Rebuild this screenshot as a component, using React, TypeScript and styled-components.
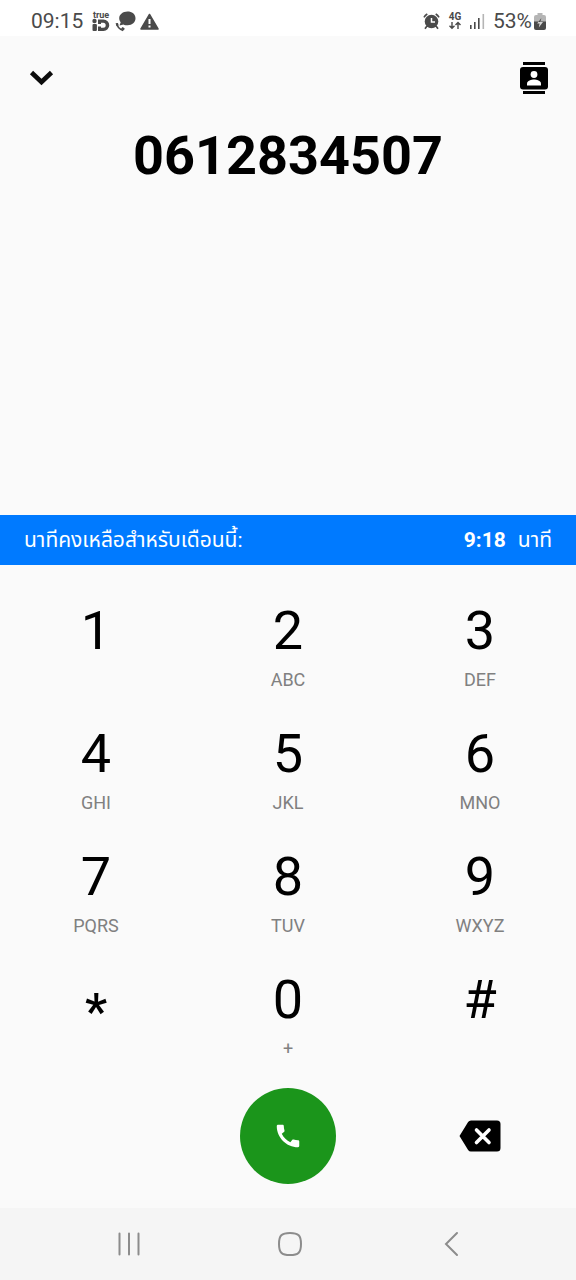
import React from "react";
import styled, { createGlobalStyle } from "styled-components";

const GlobalStyle = createGlobalStyle`
  *, *::before, *::after { box-sizing: border-box; }
  body {
    margin: 0;
    background: #fafafa;
    color: #000;
    font-family: Roboto, "Noto Sans Thai", "Noto Sans", sans-serif;
  }
  button { font: inherit; color: inherit; }
`;

const Screen = styled.div`
  display: flex;
  flex-direction: column;
  min-height: 100vh;
`;

const StatusBar = styled.header`
  display: flex;
  align-items: center;
  justify-content: space-between;
  height: 36px;
  padding: 6px 30px 0 31px;
  background: #fff;
  color: #4a4a4a;
  font-size: 21px;
  line-height: 30px;
`;

const StatusGroup = styled.div<{ $gap: number }>`
  display: flex;
  align-items: center;
  gap: ${(p) => p.$gap}px;
  svg { display: block; }
`;

const Battery = styled.div`
  display: flex;
  align-items: center;
  gap: 2px;
`;

const TopBar = styled.div`
  display: flex;
  align-items: center;
  justify-content: space-between;
  height: 84px;
  padding: 0 28px 0 24px;
`;

const IconButton = styled.button`
  display: flex;
  align-items: center;
  justify-content: center;
  padding: 0;
  border: 0;
  background: none;
  cursor: pointer;
`;

const Main = styled.main`
  display: flex;
  flex: 1;
  flex-direction: column;
`;

const NumberDisplay = styled.output`
  flex: 1;
  min-height: 72px;
  text-align: center;
  font-size: 54px;
  font-weight: 700;
  line-height: 72px;
`;

const MinutesBanner = styled.div`
  display: flex;
  align-items: center;
  justify-content: space-between;
  height: 50px;
  padding: 0 24px 1px;
  background: #007aff;
  color: #fff;
  font-size: 21px;
  line-height: 28px;
`;

const MinutesLeft = styled.span`
  display: flex;
  gap: 12px;
`;

const Keypad = styled.div`
  display: grid;
  grid-template-columns: repeat(3, 1fr);
  row-gap: 30px;
  padding-top: 34px;
`;

const Key = styled.button`
  display: flex;
  flex-direction: column;
  align-items: center;
  gap: 5px;
  height: 93px;
  padding: 0;
  border: 0;
  background: none;
  cursor: pointer;
`;

const Digit = styled.span<{ $symbol?: boolean }>`
  height: 64px;
  font-size: ${(p) => (p.$symbol ? 50 : 54)}px;
  font-weight: ${(p) => (p.$symbol ? 500 : 400)};
  line-height: ${(p) => (p.$symbol ? 88 : 64)}px;
`;

const Letters = styled.span`
  color: #808080;
  font-size: 18px;
  line-height: 24px;
`;

const Actions = styled.div`
  display: grid;
  grid-template-columns: repeat(3, 1fr);
  place-items: center;
  padding: 27px 0 24px;
`;

const CallButton = styled(IconButton)`
  grid-column: 2;
  width: 96px;
  height: 96px;
  border-radius: 50%;
  background: #1b951b;
`;

const SystemNav = styled.nav`
  display: flex;
  align-items: center;
  justify-content: space-between;
  height: 72px;
  padding: 0 111px 0 115px;
  background: #f5f5f5;
`;

const keys = [
  { digit: "1", letters: "" },
  { digit: "2", letters: "ABC" },
  { digit: "3", letters: "DEF" },
  { digit: "4", letters: "GHI" },
  { digit: "5", letters: "JKL" },
  { digit: "6", letters: "MNO" },
  { digit: "7", letters: "PQRS" },
  { digit: "8", letters: "TUV" },
  { digit: "9", letters: "WXYZ" },
  { digit: "*", letters: "" },
  { digit: "0", letters: "+" },
  { digit: "#", letters: "" },
];

const TrueIdIcon = () => (
  <svg width="20" height="22" viewBox="0 0 20 22" fill="#4a4a4a" aria-hidden="true">
    <text x="10" y="8" textAnchor="middle" fontSize="9" fontWeight="700" fontFamily="Roboto, sans-serif">true</text>
    <circle cx="3.500" cy="11" r="2.200" />
    <rect x="1.500" y="14" width="4.400" height="7" rx="1" />
    <path fillRule="evenodd" d="M7 9.500h5.500a5.700 5.700 0 0 1 0 11.500H7v-4.500h3v1.200h2.200a2.500 2.500 0 0 0 0-5H10v1.300H7z" />
  </svg>
);

const ChatCallIcon = () => (
  <svg width="21" height="21" viewBox="0 0 21 21" fill="#4a4a4a" aria-hidden="true">
    <path d="M12.500 0.500C17 0.500 20.500 3.200 20.500 7.300s-3.300 7-7.800 7c-1.600 0-3-.2-4.200-.9L4.500 14.600l1.200-3.300C4.600 10 4.200 8.800 4.200 7.300 4.200 3.300 8 .5 12.500 .5z" />
    <path d="M2 12.500c.4 3.400 2.800 6 6.200 6.800" fill="none" stroke="#4a4a4a" strokeWidth="1.800" />
    <path d="M.6 12.200l2.400-.3.500 2.400-2 .9zM6 17.600l1.700-1.500 2 1.300-.8 2.200z" />
  </svg>
);

const WarningIcon = () => (
  <svg width="19" height="17" viewBox="0 0 19 17" aria-hidden="true">
    <path d="M9.500 1.500L18 16H1z" fill="#4a4a4a" stroke="#4a4a4a" strokeWidth="1.500" strokeLinejoin="round" />
    <path d="M9.500 6v5M9.500 12.500v2" stroke="#fff" strokeWidth="2" />
  </svg>
);

const AlarmIcon = () => (
  <svg width="17" height="17" viewBox="0 0 17 17" fill="none" stroke="#4a4a4a" aria-hidden="true">
    <circle cx="8.500" cy="8.500" r="6.800" fill="#4a4a4a" stroke="none" />
    <path d="M1 4.300A9 9 0 0 1 4.300 1M12.700 1A9 9 0 0 1 16 4.300M4 13l-2 2.700M13 13l2 2.700" strokeWidth="1.700" />
    <path d="M8.500 5v4h3.500" stroke="#fff" strokeWidth="1.500" />
  </svg>
);

const NetworkIcon = () => (
  <svg width="14" height="20" viewBox="0 0 14 20" aria-hidden="true">
    <text x="7" y="9" textAnchor="middle" fontSize="10" fontWeight="700" fontFamily="Roboto, sans-serif" fill="#4a4a4a">4G</text>
    <path d="M4 11v6M1.500 14.700L4 17.200l2.500-2.500M10 18v-6M7.500 14l2.500-2.500L12.500 14" fill="none" stroke="#4a4a4a" strokeWidth="1.400" />
  </svg>
);

const SignalIcon = () => (
  <svg width="15" height="15" viewBox="0 0 15 15" fill="#4a4a4a" aria-hidden="true">
    <rect x="0" y="11" width="1.600" height="4" />
    <rect x="4" y="8" width="1.600" height="7" />
    <rect x="8" y="4" width="1.600" height="11" />
    <rect x="12.500" y="0" width="1.600" height="15" fill="#b5b5b5" />
  </svg>
);

const BatteryIcon = () => (
  <svg width="12" height="17" viewBox="0 0 12 17" aria-hidden="true">
    <path d="M3.500 0h5v2H10a2 2 0 0 1 2 2v5H0V4a2 2 0 0 1 2-2h1.500z" fill="#b5b5b5" />
    <path d="M0 8.500h12V15a2 2 0 0 1-2 2H2a2 2 0 0 1-2-2z" fill="#4a4a4a" />
    <path d="M7.300 5L3.200 10.500h2.400L4.800 14.500 9 9H6.500z" fill="#d8d8d8" />
    <path d="M7.300 5L4.300 9h2.200z" fill="#4a4a4a" />
  </svg>
);

const ChevronDownIcon = () => (
  <svg width="36" height="36" viewBox="0 0 36 36" fill="none" aria-hidden="true">
    <path d="M7.500 12.500L17.500 22L27.500 12.500" stroke="#0c0c0c" strokeWidth="4.600" />
  </svg>
);

const ContactsIcon = () => (
  <svg width="28" height="34" viewBox="0 0 28 34" aria-hidden="true">
    <path d="M3 1h22v3H3zM3 30h22v3H3z" />
    <rect x="0" y="6" width="28" height="22.500" rx="3" />
    <circle cx="14" cy="13.500" r="3.400" fill="#fff" />
    <path d="M7 24.500v-2c0-2.700 4.500-4 7-4s7 1.300 7 4v2z" fill="#fff" />
  </svg>
);

const PhoneIcon = () => (
  <svg width="30" height="30" viewBox="0 0 24 24" fill="#fff" aria-hidden="true">
    <path d="M20.010 15.380c-1.230 0-2.420-.2-3.530-.56-.35-.12-.74-.03-1.010.24l-1.570 1.970c-2.830-1.350-5.480-3.900-6.890-6.830l1.950-1.660c.27-.28.35-.67.24-1.020-.37-1.110-.56-2.300-.56-3.530 0-.54-.45-.99-.99-.99H4.190C3.650 3 3 3.240 3 3.990 3 13.280 10.730 21 20.010 21c.71 0 .99-.63.99-1.180v-3.450c0-.54-.45-.99-.99-.99z" />
  </svg>
);

const BackspaceIcon = () => (
  <svg width="42" height="32" viewBox="0 0 42 32" aria-hidden="true">
    <path d="M12 .500H38a3.500 3.500 0 0 1 3.500 3.500V28a3.500 3.500 0 0 1-3.500 3.500H12a3.500 3.500 0 0 1-2.900-1.500L.500 16 9.100 2A3.500 3.500 0 0 1 12 .500z" />
    <path d="M17.500 10L30 22.500M30 10L17.500 22.500" stroke="#fff" strokeWidth="3.600" strokeLinecap="round" />
  </svg>
);

const RecentsIcon = () => (
  <svg width="26" height="26" viewBox="0 0 26 26" stroke="#8c8c8c" strokeWidth="2" strokeLinecap="round" aria-hidden="true">
    <path d="M4.500 2.500v21M14 2.500v21M23.500 2.500v21" />
  </svg>
);

const HomeIcon = () => (
  <svg width="26" height="26" viewBox="0 0 26 26" fill="none" stroke="#8c8c8c" strokeWidth="2" aria-hidden="true">
    <path d="M13 2c8.500 0 11 2.500 11 11s-2.500 11-11 11S2 21.500 2 13 4.500 2 13 2z" />
  </svg>
);

const BackIcon = () => (
  <svg width="26" height="26" viewBox="0 0 26 26" fill="none" stroke="#8c8c8c" strokeWidth="2" strokeLinecap="round" aria-hidden="true">
    <path d="M18 2L7 13l11 11" />
  </svg>
);

export default function App() {
  return (
    <Screen>
      <GlobalStyle />
      <StatusBar>
        <StatusGroup $gap={8}>
          <time>09:15</time>
          <StatusGroup $gap={4}>
            <TrueIdIcon />
            <ChatCallIcon />
            <WarningIcon />
          </StatusGroup>
        </StatusGroup>
        <StatusGroup $gap={8}>
          <AlarmIcon />
          <NetworkIcon />
          <SignalIcon />
          <Battery>
            <span>53%</span>
            <BatteryIcon />
          </Battery>
        </StatusGroup>
      </StatusBar>
      <Main>
        <TopBar>
          <IconButton aria-label="ปิด"><ChevronDownIcon /></IconButton>
          <IconButton aria-label="รายชื่อ"><ContactsIcon /></IconButton>
        </TopBar>
        <NumberDisplay>0612834507</NumberDisplay>
        <MinutesBanner>
          <span>นาทีคงเหลือสำหรับเดือนนี้:</span>
          <MinutesLeft>
            <strong>9:18</strong>
            <span>นาที</span>
          </MinutesLeft>
        </MinutesBanner>
        <Keypad>
          {keys.map(({ digit, letters }) => (
            <Key key={digit}>
              <Digit $symbol={digit === "*"}>{digit}</Digit>
              {letters && <Letters>{letters}</Letters>}
            </Key>
          ))}
        </Keypad>
        <Actions>
          <CallButton aria-label="โทร"><PhoneIcon /></CallButton>
          <IconButton aria-label="ลบ"><BackspaceIcon /></IconButton>
        </Actions>
      </Main>
      <SystemNav>
        <IconButton aria-label="ล่าสุด"><RecentsIcon /></IconButton>
        <IconButton aria-label="หน้าหลัก"><HomeIcon /></IconButton>
        <IconButton aria-label="กลับ"><BackIcon /></IconButton>
      </SystemNav>
    </Screen>
  );
}
